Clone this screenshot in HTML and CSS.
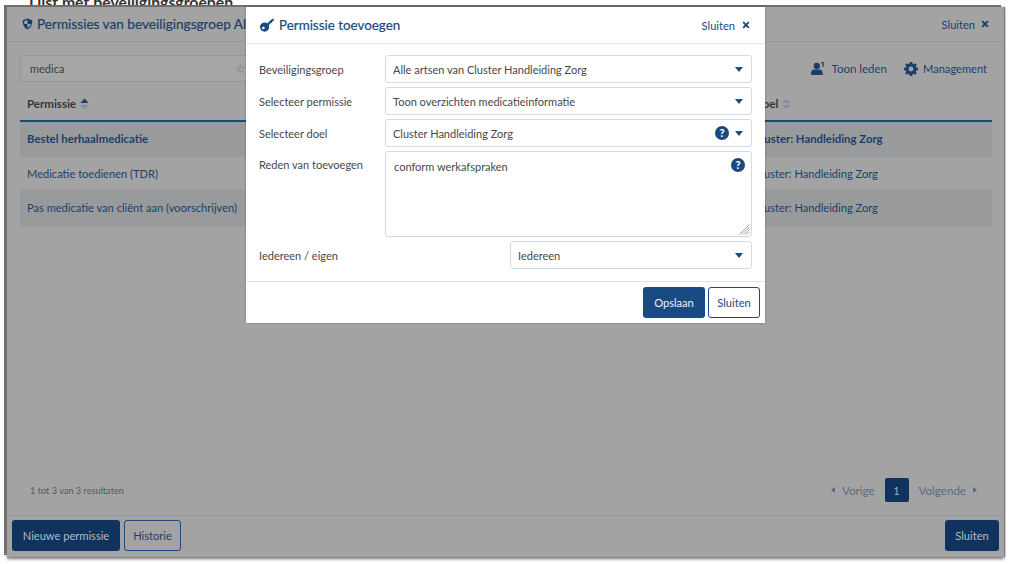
FILE: index.html
```html
<!DOCTYPE html>
<html lang="nl">
<head>
<meta charset="utf-8">
<title>Permissie toevoegen</title>
<link rel="stylesheet" href="styles.css">
</head>
<body>
<div class="behind">Lijst met beveiligingsgroepen</div>
<main class="panel">
  <header class="panel-head">
    <h1 class="panel-title">
      <svg class="ico-shield" viewBox="0 0 12 13"><path d="M6 .5 11.3 2.5C11.3 7 9.8 10.8 6 12.5 2.2 10.8.7 7 .7 2.5Z" fill="#1b3f69"/><path d="M6 2v4.5H2.4C2.7 5 2.6 3.6 2.6 3.3ZM6 6.5h3.6C9.1 8.3 8 9.9 6 10.9Z" fill="#a3a5a8"/></svg>
      <span>Permissies van beveiligingsgroep Alle artsen van Cluster Handleiding Zorg</span>
    </h1>
    <a class="close-link">Sluiten <svg class="ico-x" viewBox="0 0 8 8"><path d="M1.2 1.2 6.8 6.8M6.8 1.2 1.2 6.8" stroke="#1b3f69" stroke-width="1.9"/></svg></a>
  </header>
  <section class="tools">
    <div class="search"><span>medica</span><span class="star">☆</span></div>
    <div class="actions">
      <a class="action action-people">
        <svg class="ico-people" viewBox="0 0 16 14"><circle cx="6.2" cy="4.3" r="3.4" fill="#1b3f69"/><path d="M0 14V11.5C0 9.3 1.8 8 3.6 8H8.8C10.6 8 12.4 9.3 12.4 11.5V14Z" fill="#1b3f69"/><path d="M11.2.9 12.9 0V5.2" fill="none" stroke="#1b3f69" stroke-width="1.4"/></svg>
        Toon leden</a>
      <a class="action">
        <svg class="ico-gear" viewBox="0 0 14 14"><path fill="#1b3f69" fill-rule="evenodd" d="M5.7 0H8.3L8.6 1.8 9.7 2.3 11.2 1.2 12.8 2.8 11.7 4.3 12.2 5.4 14 5.7V8.3L12.2 8.6 11.7 9.7 12.8 11.2 11.2 12.8 9.7 11.7 8.6 12.2 8.3 14H5.7L5.4 12.2 4.3 11.7 2.8 12.8 1.2 11.2 2.3 9.7 1.8 8.6 0 8.3V5.7L1.8 5.4 2.3 4.3 1.2 2.8 2.8 1.2 4.3 2.3 5.4 1.8ZM7 4.6A2.4 2.4 0 1 0 7 9.4 2.4 2.4 0 1 0 7 4.6Z"/></svg>
        Management</a>
    </div>
  </section>
  <section class="table">
    <div class="thead">
      <div class="th">Permissie <svg class="sort" viewBox="0 0 10 12"><path d="M5 0 9.5 5H.5Z" fill="#1b3f69"/><path d="M.5 7H9.5L5 12Z" fill="#868d97"/></svg></div>
      <div class="th th-right">Doel <svg class="sort" viewBox="0 0 10 12"><path d="M5 0 9.5 5H.5Z" fill="#868d97"/><path d="M.5 7H9.5L5 12Z" fill="#868d97"/></svg></div>
    </div>
    <div class="row row-alt row-strong"><span>Bestel herhaalmedicatie</span><span class="cell-right">Cluster: Handleiding Zorg</span></div>
    <div class="row"><span>Medicatie toedienen (TDR)</span><span class="cell-right">Cluster: Handleiding Zorg</span></div>
    <div class="row row-alt"><span>Pas medicatie van cliënt aan (voorschrijven)</span><span class="cell-right">Cluster: Handleiding Zorg</span></div>
  </section>
  <section class="pager-bar">
    <span class="count">1 tot 3 van 3 resultaten</span>
    <nav class="pager">
      <span class="pg-link"><i class="tri-l"></i>Vorige</span>
      <span class="pg-num">1</span>
      <span class="pg-link">Volgende<i class="tri-r"></i></span>
    </nav>
  </section>
  <footer class="panel-foot">
    <div class="foot-left">
      <button class="btn btn-dim btn-new">Nieuwe permissie</button>
      <button class="btn btn-dim-outline btn-hist">Historie</button>
    </div>
    <button class="btn btn-dim btn-close">Sluiten</button>
  </footer>
</main>

<section class="modal">
  <header class="modal-head">
    <h2 class="modal-title">
      <svg class="ico-key" viewBox="0 0 14 14"><path fill="#1a4a82" fill-rule="evenodd" d="M4.6 4.5A4.6 4.6 0 1 1 4.6 13.7 4.6 4.6 0 1 1 4.6 4.5ZM3.4 8.7A1.3 1.3 0 1 0 3.4 11.3 1.3 1.3 0 1 0 3.4 8.7Z"/><path d="M6.4 6.6 11.3 1.6 14 .4 13.5 3.2 12 3.6 11.8 5 10.3 5.2 8.4 8Z" fill="#1a4a82"/></svg>
      Permissie toevoegen
    </h2>
    <a class="close-link close-light">Sluiten <svg class="ico-x" viewBox="0 0 8 8"><path d="M1.2 1.2 6.8 6.8M6.8 1.2 1.2 6.8" stroke="#1a4a82" stroke-width="1.9"/></svg></a>
  </header>
  <form class="modal-body">
    <div class="field">
      <label>Beveiligingsgroep</label>
      <div class="select"><span class="grow">Alle artsen van Cluster Handleiding Zorg</span><i class="caret"></i></div>
    </div>
    <div class="field">
      <label>Selecteer permissie</label>
      <div class="select"><span class="grow">Toon overzichten medicatieinformatie</span><i class="caret"></i></div>
    </div>
    <div class="field">
      <label>Selecteer doel</label>
      <div class="select"><span class="grow">Cluster Handleiding Zorg</span><i class="help">?</i><i class="caret"></i></div>
    </div>
    <div class="field field-top">
      <label>Reden van toevoegen</label>
      <div class="textarea"><span class="grow">conform werkafspraken</span><i class="help">?</i>
        <svg class="grip" viewBox="0 0 11 11"><path d="M10.5 .5 .5 10.5M10.5 3 3 10.5M10.5 5.5 5.5 10.5M10.5 8 8 10.5" stroke="#8c8f92" stroke-width=".8"/></svg>
      </div>
    </div>
    <div class="field field-split">
      <label>Iedereen / eigen</label>
      <div class="select select-short"><span class="grow">Iedereen</span><i class="caret"></i></div>
    </div>
  </form>
  <footer class="modal-foot">
    <button class="btn btn-primary">Opslaan</button>
    <button class="btn btn-outline">Sluiten</button>
  </footer>
</section>
</body>
</html>
```

FILE: styles.css
```css
* { box-sizing: border-box; }
html, body { margin: 0; height: 100%; }
body {
  width: 1012px;
  height: 564px;
  overflow: hidden;
  background: #fff;
  font-family: "Lato", "Liberation Sans", sans-serif;
  font-size: 11px;
  color: #484a4d;
  position: relative;
  padding: 7px 7px 6px 7px;
}
.behind {
  position: absolute;
  left: 29px;
  top: -5px;
  font-size: 15.8px;
  font-weight: 700;
  line-height: 14px;
  color: #333;
}
.panel {
  width: 997px;
  height: 550px;
  background: #a3a3a3;
  color: #1b3f69;
  display: flex;
  flex-direction: column;
  box-shadow: -3px -2px 0 #6f6f6f, 0 2px 3px #777, 1px 0 1px #777;
  position: relative;
}
.panel-head {
  height: 35px;
  flex: none;
  display: flex;
  align-items: center;
  justify-content: space-between;
  padding: 0 15px 0 15px;
  border-bottom: 1px solid #8f98a3;
}
.panel-title {
  margin: 0;
  font-size: 13.6px;
  font-weight: 400;
  color: #1b3f69;
  display: flex;
  align-items: center;
  gap: 4px;
  white-space: nowrap;
  overflow: hidden;
  width: 720px;
  -webkit-text-stroke: .2px #1b3f69;
}
.ico-shield { width: 11px; height: 12px; flex: none; }
.close-link {
  font-size: 11.1px;
  color: #1b3f69;
  display: flex;
  align-items: center;
  gap: 6px;
}
.close-light { color: #1a4a82; gap: 7px; }
.ico-x { width: 8px; height: 8px; }
.tools {
  flex: none;
  display: flex;
  justify-content: space-between;
  align-items: center;
  padding: 13px 17px 8px 13px;
  height: 48px;
}
.search {
  width: 290px;
  height: 27px;
  border: 1px solid #8f98a3;
  border-radius: 3px;
  background: #a6a6a6;
  color: #3c3d3e;
  padding: 0 9px;
  display: flex;
  justify-content: space-between;
  align-items: center;
}
.star { color: #707376; font-size: 12px; margin-right: 54px; }
.actions { display: flex; gap: 17px; align-items: center; font-size: 11.1px; }
.action {
  display: flex;
  align-items: center;
  gap: 5px;
  color: #1b3f69;
}
.action-people { gap: 6px; font-size: 11.5px; }
.ico-people { width: 15px; height: 13px; }
.ico-gear { width: 14px; height: 14px; }
.table { flex: none; margin: 0 12px 0 13px; }
.thead {
  height: 32px;
  padding: 0 7px 3px;
  display: flex;
  align-items: center;
  justify-content: space-between;
  border-bottom: 2px solid #1d4a79;
}
.th { font-weight: 700; color: #333639; display: flex; align-items: center; gap: 4px; font-size: 11.5px; }
.th-right { width: 231px; }
.sort { width: 9px; height: 12px; }
.row {
  height: 34.5px;
  display: flex;
  align-items: center;
  justify-content: space-between;
  padding: 0 7px;
  border-bottom: 1px solid #999a9c;
  font-size: 11.1px;
  color: #1b3f69;
}
.row-alt { background: #989a9c; }
.row-strong { font-weight: 700; font-size: 11.35px; }
.cell-right { width: 231px; }
.pager-bar {
  flex: 1;
  display: flex;
  align-items: flex-end;
  justify-content: space-between;
  padding: 0 27px 13px 23px;
}
.count { font-size: 9.2px; color: #56595c; margin-bottom: 6px; }
.pager { display: flex; align-items: center; gap: 10px; font-size: 11.6px; }
.pg-link { display: flex; align-items: center; gap: 7px; color: #556a84; }
.pg-num {
  width: 24px;
  height: 24px;
  display: flex;
  align-items: center;
  justify-content: center;
  background: #0f335e;
  border-radius: 2px;
  color: #a8b0ba;
  font-size: 11px;
}
.tri-l, .tri-r { width: 0; height: 0; border-top: 3px solid transparent; border-bottom: 3px solid transparent; }
.tri-l { border-right: 4px solid #556a84; }
.tri-r { border-left: 4px solid #556a84; }
.panel-foot {
  flex: none;
  height: 42px;
  border-top: 1px solid #8f98a3;
  display: flex;
  justify-content: space-between;
  align-items: flex-start;
  padding: 4px 5px 0 5px;
}
.foot-left { display: flex; gap: 4px; }
.btn {
  font: inherit;
  font-size: 11.1px;
  height: 31px;
  border-radius: 3px;
  padding: 0;
  border: 1px solid transparent;
}
.btn-new { width: 108px; }
.btn-hist { width: 57px; }
.btn-close { width: 54px; }
.btn-dim { background: #0f335e; color: #b4bbc4; }
.btn-dim-outline { background: transparent; border-color: #1d4a79; color: #1b3f69; }
.btn-primary { background: #1a4a82; color: #eef1f5; width: 62px; }
.btn-outline { background: #fff; border-color: #1a4a82; color: #1a4a82; width: 52px; }
.modal {
  position: absolute;
  left: 246px;
  top: 7px;
  width: 519px;
  height: 316px;
  background: #fff;
  display: flex;
  flex-direction: column;
  box-shadow: 0 0 2px rgba(0,0,0,.3);
}
.modal-head {
  height: 37px;
  flex: none;
  display: flex;
  align-items: center;
  justify-content: space-between;
  padding: 0 15px 0 14px;
  border-bottom: 1px solid #dde4ec;
}
.modal-title {
  margin: 0;
  font-size: 13.4px;
  font-weight: 400;
  color: #1a4a82;
  display: flex;
  align-items: center;
  gap: 5px;
  -webkit-text-stroke: .2px #1a4a82;
}
.ico-key { width: 14px; height: 14px; }
.modal-body {
  flex: 1;
  display: flex;
  flex-direction: column;
  gap: 4px;
  padding: 11px 13px 0 13px;
}
.field { display: flex; align-items: center; color: #46484b; }
.field-top { align-items: flex-start; }
.field-split { justify-content: space-between; }
.field label { width: 126px; flex: none; }
.field-top label { padding-top: 7px; }
.grow { flex: 1; }
.select {
  width: 368px;
  height: 28px;
  border: 1px solid #d3dce6;
  border-radius: 3px;
  padding: 0 8px 0 7px;
  display: flex;
  align-items: center;
  color: #46484b;
}
.select-short { width: 242px; }
.caret {
  width: 0;
  height: 0;
  border-left: 4.5px solid transparent;
  border-right: 4.5px solid transparent;
  border-top: 5px solid #1a4a82;
}
.help {
  width: 14px;
  height: 14px;
  border-radius: 50%;
  background: #1a4a82;
  color: #fff;
  font-style: normal;
  font-weight: 900;
  font-size: 11px;
  line-height: 14px;
  text-align: center;
  margin-right: 6px;
}
.textarea {
  width: 368px;
  height: 86px;
  border: 1px solid #d3dce6;
  border-radius: 3px;
  padding: 6px 6px 0 8px;
  display: flex;
  align-items: flex-start;
  position: relative;
}
.textarea .help { margin-right: 0; }
.textarea .grow { line-height: 18px; }
.grip { position: absolute; right: 1px; bottom: 1px; width: 11px; height: 11px; }
.modal-foot {
  flex: none;
  height: 42px;
  border-top: 1px solid #dde4ec;
  display: flex;
  justify-content: flex-end;
  align-items: center;
  gap: 3px;
  padding: 0 5px;
}
```
